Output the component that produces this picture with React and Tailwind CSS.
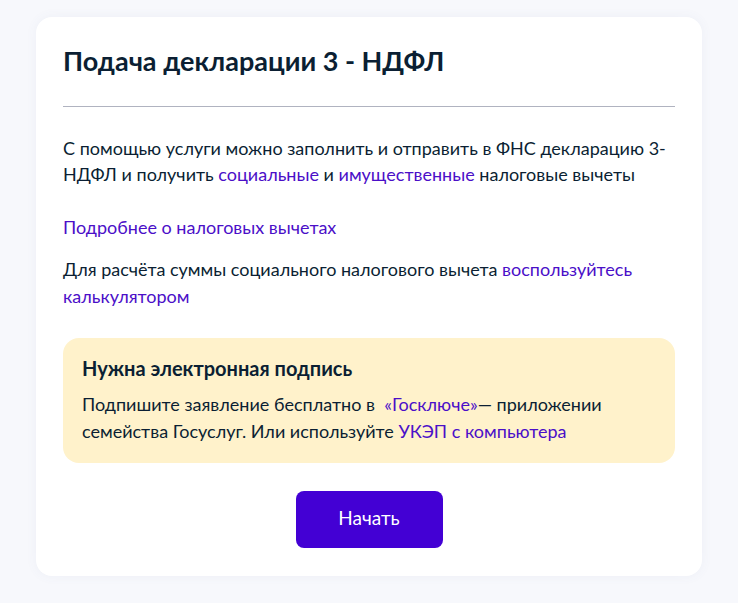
import React from 'react';

const Link = ({ children }) => (
    <a href="#" className="text-[#4b0fc8] hover:underline">{children}</a>
);

export default function App() {
    return (
        <div className="min-h-screen bg-[#f7f8fc] pt-[17px] px-[36px] pb-8" style={{ fontFamily: 'Lato, "Noto Sans", sans-serif' }}>
            <div className="bg-white rounded-[16px] shadow-[0_0_12px_rgba(80,100,160,0.06)] px-[27px] pt-[28px] pb-[28px] text-[#0b1f33]">
                <h1 className="text-[27px] leading-[32px] font-bold">Подача декларации 3 - НДФЛ</h1>

                <div className="mt-[29px] h-px bg-[#b0b3c0]" />

                <p className="mt-[28px] text-[18px] leading-[26px]">
                    С помощью услуги можно заполнить и отправить в ФНС декларацию 3-НДФЛ и получить <Link>социальные</Link> и <Link>имущественные</Link> налоговые вычеты
                </p>

                <p className="mt-[27px] text-[18px] leading-[26px]">
                    <Link>Подробнее о налоговых вычетах</Link>
                </p>

                <p className="mt-[16px] text-[18px] leading-[27px]">
                    Для расчёта суммы социального налогового вычета <Link>воспользуйтесь калькулятором</Link>
                </p>

                <div className="mt-[28px] bg-[#fff2cb] rounded-[16px] px-[19px] pt-[18px] pb-[18px]">
                    <h2 className="text-[20px] leading-[24px] font-bold">Нужна электронная подпись</h2>
                    <p className="mt-[11px] text-[18px] leading-[27px] pr-[40px]">
                        Подпишите заявление бесплатно в&nbsp; <Link>«Госключе»</Link>— приложении семейства Госуслуг. Или используйте <Link>УКЭП с компьютера</Link>
                    </p>
                </div>

                <div className="mt-[28px] flex justify-center">
                    <button className="w-[147px] h-[57px] rounded-[8px] bg-[#4300d4] text-white text-[19px] pb-[3px]">
                        Начать
                    </button>
                </div>
            </div>
        </div>
    );
}
